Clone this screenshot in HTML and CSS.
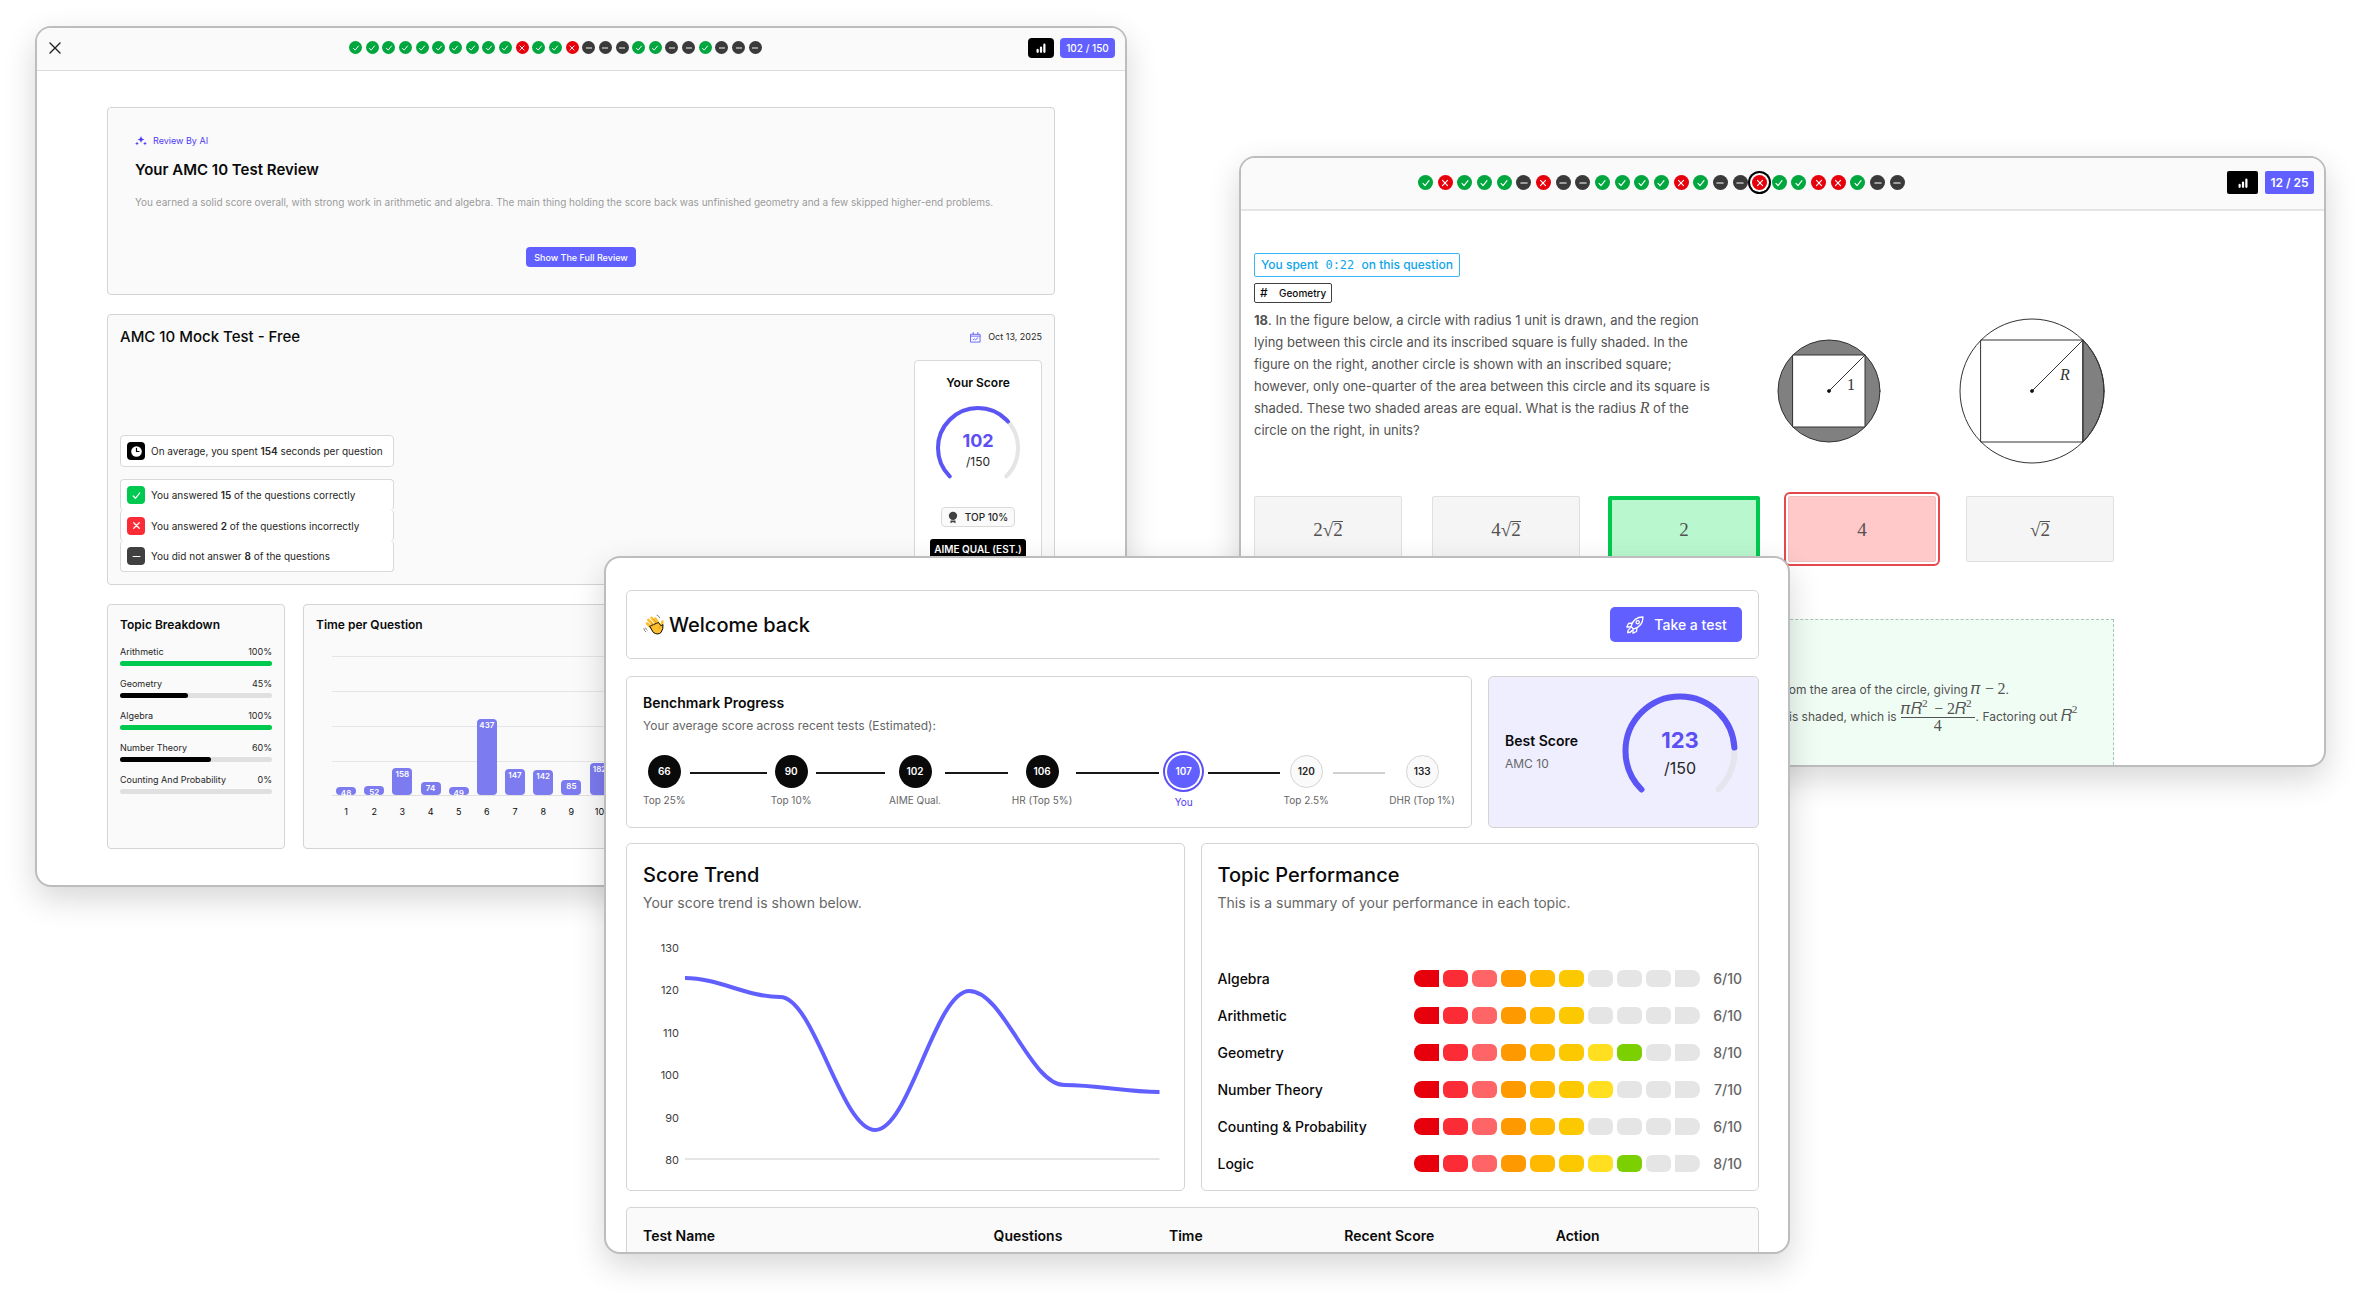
FILE: index.html
```html
<!DOCTYPE html>
<html lang="en">
<head>
<meta charset="UTF-8">
<meta name="viewport" content="width=device-width, initial-scale=1.0">
<title>AMC 10 Practice</title>
<link rel="stylesheet" href="styles.css">
</head>
<body>

<svg class="sprite" aria-hidden="true">
    <symbol id="icon-check" viewBox="0 0 16 16"><path d="M4 8.6l2.7 2.8L12 4.8"/></symbol>
    <symbol id="icon-cross" viewBox="0 0 16 16"><path d="M4.6 4.6l6.8 6.8M11.4 4.6l-6.8 6.8"/></symbol>
    <symbol id="icon-minus" viewBox="0 0 16 16"><path d="M3.8 8h8.4"/></symbol>
    <symbol id="icon-bars" viewBox="0 0 16 16"><path d="M3.5 13v-2.5M8 13V7.500M12.500 13V3.500"/></symbol>
</svg>

<main class="stage">

    <!-- test review -->
    <section class="window review">
        <header class="topbar">
            <button class="close" aria-label="Close"><svg viewBox="0 0 12 12"><path d="M1 1l10 10M11 1L1 11"/></svg></button>
            <div class="dots" data-results="ccccccccccxccxmmmccmmcmmm"></div>
            <div class="tags">
                <button class="tag dark" aria-label="Statistics"><svg class="icon"><use href="#icon-bars"/></svg></button>
                <span class="tag">102 / 150</span>
            </div>
        </header>
        <div class="review-body">
            <div class="panel ai-panel">
                <p class="ai-label">
                    <svg viewBox="0 0 12 10"><path d="M6 0l1 2.400L9.400 3.400 7 4.400 6 6.800 5 4.400 2.600 3.400 5 2.400zM2 5.500l.6 1.400L4 7.500l-1.400.6L2 9.500l-.6-1.400L0 7.500l1.400-.6zM10 5.500l.6 1.400 1.400.6-1.400.6-.6 1.400-.6-1.400L8 7.500l1.400-.6z"/></svg>
                    Review By AI
                </p>
                <h2>Your AMC 10 Test Review</h2>
                <p class="ai-text">You earned a solid score overall, with strong work in arithmetic and algebra. The main thing holding the score back was unfinished geometry and a few skipped higher-end problems.</p>
                <button class="btn-small">Show The Full Review</button>
            </div>

            <div class="panel result-panel">
                <div class="result-left">
                    <h2>AMC 10 Mock Test - Free</h2>
                    <ul class="stats">
                        <li class="spaced"><span class="stat-icon black"><svg viewBox="0 0 16 16"><circle cx="8" cy="8" r="6.500" fill="#fff" stroke="none"/><path d="M8 4v4h3" stroke="#000"/></svg></span>On average, you spent&nbsp;<b>154</b>&nbsp;seconds per question</li>
                        <li><span class="stat-icon green"><svg><use href="#icon-check"/></svg></span>You answered&nbsp;<b>15</b>&nbsp;of the questions correctly</li>
                        <li><span class="stat-icon red"><svg><use href="#icon-cross"/></svg></span>You answered&nbsp;<b>2</b>&nbsp;of the questions incorrectly</li>
                        <li><span class="stat-icon gray"><svg><use href="#icon-minus"/></svg></span>You did not answer&nbsp;<b>8</b>&nbsp;of the questions</li>
                    </ul>
                </div>
                <div class="result-right">
                    <p class="date">
                        <svg viewBox="0 0 12 12"><path d="M1 2.500h10v8.500H1zM1 4.500h10M3.500.5v2M8.500.5v2M3.500 8.500l1.500-1 1 1 2.500-2"/></svg>
                        Oct 13, 2025
                    </p>
                    <div class="score-card">
                        <h3>Your Score</h3>
                        <div class="gauge">
                            <svg viewBox="0 0 84 84">
                                <path class="track" d="M13.700 70.300A40 40 0 1 1 70.300 70.300"/>
                                <path class="value" pathLength="100" stroke-dasharray="68 100" d="M13.700 70.300A40 40 0 1 1 70.300 70.300"/>
                            </svg>
                            <div class="gauge-text"><strong>102</strong><span>/150</span></div>
                        </div>
                        <span class="rank"><svg viewBox="0 0 12 14"><circle cx="6" cy="5" r="5"/><path d="M3 10.500h6V14l-3-1.500L3 14z"/></svg>TOP 10%</span>
                        <span class="qual">AIME QUAL (EST.)</span>
                    </div>
                </div>
            </div>

            <div class="review-row">
                <div class="panel breakdown">
                    <h3>Topic Breakdown</h3>
                    <div class="topic"><span>Arithmetic</span><span>100%</span><div class="bar"><i class="full" style="width:100%"></i></div></div>
                    <div class="topic"><span>Geometry</span><span>45%</span><div class="bar"><i style="width:45%"></i></div></div>
                    <div class="topic"><span>Algebra</span><span>100%</span><div class="bar"><i class="full" style="width:100%"></i></div></div>
                    <div class="topic"><span>Number Theory</span><span>60%</span><div class="bar"><i style="width:60%"></i></div></div>
                    <div class="topic"><span>Counting And Probability</span><span>0%</span><div class="bar"></div></div>
                </div>
                <div class="panel time-panel">
                    <h3>Time per Question</h3>
                    <div class="time-chart" id="timeChart"></div>
                    <div class="time-axis" id="timeAxis"></div>
                </div>
            </div>
        </div>
    </section>

    <!-- question view -->
    <section class="window question">
        <header class="topbar">
            <div class="dots" data-results="cxcccmxmmccccxcmmxccxxcmm" data-current="17"></div>
            <div class="tags">
                <button class="tag dark" aria-label="Statistics"><svg class="icon"><use href="#icon-bars"/></svg></button>
                <span class="tag">12 / 25</span>
            </div>
        </header>
        <div class="question-body">
            <div class="problem">
                <div class="problem-text">
                    <p class="spent">You spent <code>0:22</code> on this question</p>
                    <p class="subject"><span>#</span>Geometry</p>
                    <p class="prompt"><b>18</b>. In the figure below, a circle with radius 1 unit is drawn, and the region<br>
                    lying between this circle and its inscribed square is fully shaded. In the<br>
                    figure on the right, another circle is shown with an inscribed square;<br>
                    however, only one-quarter of the area between this circle and its square is<br>
                    shaded. These two shaded areas are equal. What is the radius <i>R</i> of the<br>
                    circle on the right, in units?</p>
                </div>
                <svg class="figure" viewBox="0 0 328 146">
                    <circle cx="52" cy="73" r="51" fill="#808080"/>
                    <path d="M16 37h72v72H16z" fill="#fff"/>
                    <path d="M52 73l36-36"/>
                    <circle cx="52" cy="73" r="1.500" fill="#000"/>
                    <path d="M306 22A72 72 0 0 1 306 124z" fill="#808080"/>
                    <circle cx="255" cy="73" r="72"/>
                    <path d="M204 22h102v102H204z"/>
                    <path d="M255 73l51-51"/>
                    <circle cx="255" cy="73" r="1.500" fill="#000"/>
                    <text x="70" y="72">1</text>
                    <text x="283" y="62" font-style="italic">R</text>
                </svg>
            </div>
            <div class="answers">
                <button><math><mn>2</mn><msqrt><mn>2</mn></msqrt></math></button>
                <button><math><mn>4</mn><msqrt><mn>2</mn></msqrt></math></button>
                <button class="correct"><math><mn>2</mn></math></button>
                <button class="wrong"><math><mn>4</mn></math></button>
                <button><math><msqrt><mn>2</mn></msqrt></math></button>
            </div>
            <div class="solution">
                <p class="continued">from the area of the circle, giving <math><mi>π</mi><mo>−</mo><mn>2</mn></math>.</p>
                <p>is shaded, which is <math displaystyle="true"><mfrac><mrow><mi>π</mi><msup><mi>R</mi><mn>2</mn></msup><mo>−</mo><mn>2</mn><msup><mi>R</mi><mn>2</mn></msup></mrow><mn>4</mn></mfrac></math>. Factoring out <math><msup><mi>R</mi><mn>2</mn></msup></math></p>
            </div>
        </div>
    </section>

    <!-- dashboard -->
    <section class="window dashboard">
        <div class="card welcome">
            <h1>
                <svg class="wave" viewBox="0 0 22 22">
                    <g fill="none" stroke="#fbbf2d" stroke-linecap="round" stroke-width="2.600"><path d="M4 9.500l6 6M5.200 5.800l7 7M8.500 3.800l6.500 8M12.300 4.500l4 6.500M19.500 7.500l-1.500 6"/></g>
                    <path d="M7 12L15.500 8.500 18 12 20 10.500Q20.500 15 18 18.500 14.500 21.500 10.500 18.500z" fill="#fbbf2d"/>
                    <path d="M7.300 6.800l4 4.500M10.600 5.200l3.500 4.500M6 9.700l3.500 3.500M15.800 15q.2-2.500 1.700-3.500" fill="none" stroke="#e08f12" stroke-width=".6"/>
                    <path d="M14 1.200q2 .6 2.700 2.500M.8 14.500q.3 2.200 2 3.400M2.600 14q.2 1.500 1.500 2.400" fill="none" stroke="#666" stroke-width=".8"/>
                </svg>
                Welcome back
            </h1>
            <button class="btn">
                <svg viewBox="0 0 20 20"><path d="M6 11.500C7.500 6 11.500 2 18 2c0 6.500-4 10.500-9.500 12zM7.500 8L3.500 8.500 1.800 12l4 0M12 12.500l-.5 4L8 18.200V14.200M5 13.500c-1.500.5-2.300 2-2.300 4.200 2.200 0 3.500-.7 4.200-2.200"/><circle cx="12.700" cy="7.300" r="1.600"/></svg>
                Take a test
            </button>
        </div>

        <div class="top-row">
            <div class="card benchmark">
                <h3>Benchmark Progress</h3>
                <p>Your average score across recent tests (Estimated):</p>
                <ol class="steps">
                    <li class="step"><b>66</b>Top 25%</li>
                    <li class="line" style="flex-grow:81"></li>
                    <li class="step"><b>90</b>Top 10%</li>
                    <li class="line" style="flex-grow:73"></li>
                    <li class="step"><b>102</b>AIME Qual.</li>
                    <li class="line" style="flex-grow:66"></li>
                    <li class="step"><b>106</b>HR (Top 5%)</li>
                    <li class="line" style="flex-grow:87"></li>
                    <li class="step you"><b>107</b>You</li>
                    <li class="line" style="flex-grow:75"></li>
                    <li class="step next"><b>120</b>Top 2.5%</li>
                    <li class="line next" style="flex-grow:55"></li>
                    <li class="step next"><b>133</b>DHR (Top 1%)</li>
                </ol>
            </div>
            <div class="card best">
                <div>
                    <h3>Best Score</h3>
                    <p>AMC 10</p>
                </div>
                <div class="gauge large">
                    <svg viewBox="0 0 116 116">
                        <path class="track" d="M19.500 96.500A54.500 54.500 0 1 1 96.500 96.500"/>
                        <path class="value" pathLength="100" stroke-dasharray="82 100" d="M19.500 96.500A54.500 54.500 0 1 1 96.500 96.500"/>
                    </svg>
                    <div class="gauge-text"><strong>123</strong><span>/150</span></div>
                </div>
            </div>
        </div>

        <div class="middle-row">
            <div class="card">
                <h2>Score Trend</h2>
                <p>Your score trend is shown below.</p>
                <div class="trend">
                    <div class="trend-axis"><span>130</span><span>120</span><span>110</span><span>100</span><span>90</span><span>80</span></div>
                    <svg viewBox="0 0 474 212" preserveAspectRatio="none">
                        <path class="base" d="M0 211h474"/>
                        <path class="curve" d="M0 30C34 30 61 49 95 49S156 182 190 182S250 43 284 43S345 137 379 137S440 144 474 144"/>
                    </svg>
                </div>
            </div>
            <div class="card">
                <h2>Topic Performance</h2>
                <p>This is a summary of your performance in each topic.</p>
                <div class="topics" id="topics"></div>
            </div>
        </div>

        <div class="tests">
            <table>
                <thead>
                    <tr><th>Test Name</th><th>Questions</th><th>Time</th><th>Recent Score</th><th>Action</th></tr>
                </thead>
            </table>
        </div>
    </section>
</main>

<script>
    var kinds = {
        c: ['correct', 'check'],
        x: ['incorrect', 'cross'],
        m: ['skipped', 'minus']
    };

    // question markers in the top bars
    document.querySelectorAll('.dots').forEach(function (el) {
        var html = '';
        el.dataset.results.split('').forEach(function (r, i) {
            var current = String(i) === el.dataset.current ? ' current' : '';
            html += '<button class="dot ' + kinds[r][0] + current + '" aria-label="Question ' + (i + 1) + ', ' + kinds[r][0] + '">' +
                '<svg><use href="#icon-' + kinds[r][1] + '"/></svg></button>';
        });
        el.innerHTML = html;
    });

    // seconds per question, chart top is 800
    var times = [48, 52, 158, 74, 49, 437, 147, 142, 85, 182];
    var bars = '';
    var axis = '';
    times.forEach(function (t, i) {
        bars += '<span style="height:' + (t / 8) + '%">' + t + '</span>';
        axis += '<span>' + (i + 1) + '</span>';
    });
    document.getElementById('timeChart').innerHTML = bars;
    document.getElementById('timeAxis').innerHTML = axis;

    var topics = [['Algebra', 6], ['Arithmetic', 6], ['Geometry', 8], ['Number Theory', 7], ['Counting &amp; Probability', 6], ['Logic', 8]];
    var rows = '';
    topics.forEach(function (t) {
        rows += '<div class="topic-row"><span class="topic-name">' + t[0] + '</span><div class="segments">';
        for (var i = 1; i <= 10; i++) {
            rows += '<i class="' + (i <= t[1] ? 's' + i : '') + '"></i>';
        }
        rows += '</div><span class="topic-score">' + t[1] + '/10</span></div>';
    });
    document.getElementById('topics').innerHTML = rows;
</script>

</body>
</html>
```

FILE: styles.css
```css
* {
    box-sizing: border-box;
}
body {
    margin: 0;
    background: #fff;
    color: #0a0a0a;
    font-family: Inter, "Liberation Sans", sans-serif;
    font-size: 14px;
}
h1, h2, h3, p, ul, ol {
    margin: 0;
    padding: 0;
    list-style: none;
}
button {
    border: 0;
    padding: 0;
    background: none;
    color: inherit;
    font: inherit;
    cursor: pointer;
}
svg {
    display: block;
    fill: none;
    stroke: currentColor;
    stroke-linecap: round;
    stroke-linejoin: round;
}
math {
    font-family: "Liberation Serif", serif;
}
.sprite {
    position: absolute;
    width: 0;
    height: 0;
}
.stage {
    position: relative;
    min-height: 1294px;
    overflow: hidden;
}

/* windows */
.window {
    position: absolute;
    border: 2px solid #bdbdbd;
    border-radius: 16px;
    background: #fff;
    box-shadow: 0 12px 32px rgba(0, 0, 0, 0.16);
    overflow: hidden;
}
.review {
    top: 26px;
    left: 35px;
    right: calc(50% + 53px);
}
.question {
    top: 156px;
    left: calc(50% + 59px);
    right: 34px;
}
.dashboard {
    top: 556px;
    left: calc(25% + 14px);
    right: calc(25% - 20px);
    padding: 32px 29px 0 20px;
}

/* top bars */
.topbar {
    display: flex;
    align-items: center;
    justify-content: space-between;
    height: 43px;
    padding: 0 10px 3px 12px;
    background: #fafafa;
    border-bottom: 1px solid #dcdcdc;
}
.close {
    width: 34px;
}
.close svg {
    width: 12px;
    height: 12px;
    color: #222;
    stroke-width: 1.4;
}
.dots {
    display: flex;
    justify-content: space-between;
    width: 413px;
}
.dot {
    display: grid;
    place-items: center;
    width: 13px;
    height: 13px;
    border-radius: 50%;
    color: #fff;
}
.dot svg {
    width: 10px;
    height: 10px;
    stroke-width: 1.5;
}
.correct {
    background: #00a63e;
}
.incorrect {
    background: #e7000b;
}
.skipped {
    background: #3a3a3a;
}
.tags {
    display: flex;
    gap: 6px;
}
.tag {
    display: grid;
    place-items: center;
    width: 55px;
    height: 20px;
    border-radius: 4px;
    background: #615fff;
    color: #fff;
    font-size: 10px;
    font-weight: 500;
}
.tag.dark {
    width: 26px;
    background: #000;
}
.tag .icon {
    width: 12px;
    height: 12px;
    stroke-width: 3;
}

/* review window */
.review-body {
    display: flex;
    flex-direction: column;
    gap: 19px;
    padding: 36px 70px;
}
.panel {
    border: 1px solid #d4d4d4;
    border-radius: 4px;
    background: #fafafa;
}
.ai-panel {
    display: flex;
    flex-direction: column;
    padding: 26px 27px 27px;
}
.ai-label {
    display: flex;
    align-items: center;
    gap: 6px;
    color: #4f39f6;
    font-size: 9px;
    line-height: 14px;
}
.ai-label svg {
    width: 12px;
    height: 10px;
    fill: currentColor;
    stroke: none;
}
.ai-panel h2 {
    margin-top: 12px;
    font-size: 15px;
    font-weight: 600;
    line-height: 20px;
}
.ai-text {
    margin-top: 14px;
    color: #9a9a9a;
    font-size: 10px;
    line-height: 16px;
}
.btn-small {
    align-self: center;
    width: 110px;
    height: 20px;
    margin-top: 37px;
    border-radius: 4px;
    background: #615fff;
    color: #fff;
    font-size: 9px;
    font-weight: 500;
}
.result-panel {
    display: flex;
    justify-content: space-between;
    padding: 12px;
}
.result-left {
    display: flex;
    flex-direction: column;
    justify-content: space-between;
}
.result-left h2 {
    font-size: 15px;
    font-weight: 500;
    line-height: 20px;
}
.stats li {
    display: flex;
    align-items: center;
    width: 274px;
    height: 31px;
    padding: 0 6px;
    border: 1px solid #d9d9d9;
    border-width: 0 1px;
    border-radius: 4px;
    background: #fff;
    color: #262626;
    font-size: 10px;
}
.stats b {
    font-weight: 600;
}
.stats .spaced {
    height: 32px;
    margin-bottom: 12px;
    border-width: 1px;
}
.stats .spaced + li {
    border-top-width: 1px;
}
.stats li:last-child {
    border-bottom-width: 1px;
}
.stat-icon {
    display: grid;
    place-items: center;
    width: 18px;
    height: 18px;
    margin-right: 6px;
    border-radius: 4px;
    color: #fff;
}
.stat-icon svg {
    width: 13px;
    height: 13px;
    stroke-width: 1.5;
}
.black {
    background: #000;
}
.green {
    background: #00c950;
}
.red {
    background: #fb2c36;
}
.gray {
    background: #404040;
}
.date {
    display: flex;
    align-items: center;
    justify-content: flex-end;
    gap: 7px;
    color: #262626;
    font-size: 9px;
    line-height: 20px;
}
.date svg {
    width: 11px;
    height: 11px;
    color: #615fff;
}
.score-card {
    display: flex;
    flex-direction: column;
    align-items: center;
    width: 128px;
    height: 212px;
    margin-top: 13px;
    padding-top: 12px;
    border: 1px solid #d9d9d9;
    border-radius: 4px;
    background: #fff;
}
h3 {
    font-size: 12px;
    font-weight: 600;
    line-height: 20px;
}
.gauge {
    display: grid;
    width: 84px;
    height: 84px;
    margin-top: 13px;
}
.gauge > * {
    grid-area: 1 / 1;
}
.gauge path {
    stroke-width: 4;
}
.gauge .track {
    stroke: #e5e5e5;
}
.gauge .value {
    stroke: #5b55f6;
}
.gauge-text {
    display: flex;
    flex-direction: column;
    align-items: center;
    justify-content: center;
    padding-top: 6px;
    color: #262626;
    font-size: 12px;
    line-height: 20px;
}
.gauge-text strong {
    color: #5b4ff5;
    font-size: 18px;
    line-height: 22px;
}
.rank {
    display: flex;
    align-items: center;
    gap: 7px;
    height: 20px;
    margin-top: 17px;
    padding: 0 6px;
    border: 1px solid #d9d9d9;
    border-radius: 4px;
    background: #fafafa;
    color: #262626;
    font-size: 10px;
    font-weight: 500;
}
.rank svg {
    width: 10px;
    height: 13px;
    fill: #404040;
    stroke: none;
}
.qual {
    margin-top: 12px;
    padding: 0 4px;
    border-radius: 3px;
    background: #000;
    color: #fff;
    font-size: 10px;
    font-weight: 600;
    line-height: 20px;
}
.review-row {
    display: grid;
    grid-template-columns: 178px 1fr;
    gap: 18px;
}
.breakdown, .time-panel {
    height: 245px;
    padding: 10px 12px;
}
.breakdown h3 {
    margin-bottom: 8px;
}
.topic {
    display: grid;
    grid-template-columns: 1fr auto;
    align-content: start;
    height: 32px;
    color: #262626;
    font-size: 9px;
    line-height: 18px;
}
.bar {
    grid-column: 1 / 3;
    height: 5px;
    border-radius: 3px;
    background: #e0e0e0;
}
.bar i {
    display: block;
    height: 5px;
    border-radius: 3px;
    background: #000;
}
.bar .full {
    background: #00c950;
}
.time-chart, .time-axis {
    display: grid;
    grid-template-columns: repeat(25, 1fr);
    margin: 0 6px 0 16px;
}
.time-chart {
    align-items: end;
    justify-items: center;
    height: 140px;
    margin-top: 21px;
    border-bottom: 1px solid #e0e0e0;
    background: repeating-linear-gradient(#e5e5e5 0 1px, transparent 1px 35px);
}
.time-chart span {
    width: 20px;
    padding-top: 2px;
    border-radius: 4px;
    background: #7c7bf0;
    color: #fff;
    font-size: 8px;
    font-weight: 600;
    line-height: 8px;
    text-align: center;
}
.time-axis {
    margin-top: 8px;
    font-size: 9px;
    line-height: 16px;
    text-align: center;
}

/* question window */
.question .topbar {
    height: 53px;
    padding: 0 10px 2px 177px;
    border-bottom: 2px solid #e5e5e5;
}
.question .dots {
    width: 487px;
}
.question .dot {
    width: 15px;
    height: 15px;
}
.question .dot svg {
    width: 12px;
    height: 12px;
}
.dot.current {
    box-shadow: 0 0 0 2px #fff, 0 0 0 4px #000;
}
.question .tags {
    gap: 7px;
}
.question .tag {
    width: 49px;
    height: 23px;
    border-radius: 2px;
    font-size: 12px;
    font-weight: 600;
}
.question .tag.dark {
    width: 31px;
}
.question-body {
    padding: 42px 15px 0 13px;
    max-width: 888px;
}
.problem {
    display: grid;
    grid-template-columns: 1fr 328px;
    align-items: end;
    padding-right: 9px;
}
.problem-text {
    height: 211px;
    white-space: nowrap;
}
.spent, .subject {
    width: max-content;
    border-radius: 2px;
}
.spent {
    padding: 0 6px;
    border: 1px solid #38b6f5;
    color: #0ea5e9;
    font-size: 12px;
    font-weight: 500;
    line-height: 22px;
}
.spent code {
    margin: 0 4px;
    font-family: "DejaVu Sans Mono", monospace;
    font-size: 12px;
    font-weight: 400;
}
.subject {
    margin-top: 6px;
    padding: 0 5px;
    border: 1px solid #404040;
    font-size: 10px;
    font-weight: 500;
    line-height: 18px;
}
.subject span {
    display: inline-block;
    width: 19px;
    font-size: 12px;
}
.prompt {
    margin-top: 6px;
    color: #525252;
    font-size: 13px;
    line-height: 22px;
}
.prompt i {
    font-family: "Liberation Serif", serif;
    font-size: 16px;
    line-height: 16px;
}
.figure {
    width: 328px;
    height: 146px;
    stroke: #333;
}
.figure text {
    fill: #333;
    stroke: none;
    font-family: "Liberation Serif", serif;
    font-size: 16px;
}
.answers {
    display: grid;
    grid-template-columns: repeat(5, 1fr);
    gap: 30px;
    margin-top: 32px;
}
.answers button {
    height: 66px;
    border: 1px solid #e0e0e0;
    border-radius: 2px;
    background: #f5f5f5;
    color: #525252;
    font-size: 19px;
}
.answers .correct {
    margin: 0 -2px;
    border: 4px solid #00c950;
    background: #b9f8cf;
}
.answers .wrong {
    border-color: #eec0c0;
    background: #ffc9c9;
    outline: 2px solid #e5484d;
    outline-offset: 2px;
}
.solution {
    height: 146px;
    margin-top: 57px;
    padding: 60px 0 0 534px;
    border: 1px dashed #a9c4b2;
    border-bottom: 0;
    background: #f0fdf4;
    color: #525252;
    font-size: 12px;
    white-space: nowrap;
}
.solution p {
    line-height: 20px;
}
.solution math {
    font-size: 16px;
}
.solution .continued {
    text-indent: -9px;
}

/* dashboard window */
.card {
    padding: 16px;
    border: 1px solid #d4d4d4;
    border-radius: 5px;
    background: #fff;
}
.card p {
    color: #666;
}
.welcome {
    display: flex;
    align-items: center;
    justify-content: space-between;
    height: 69px;
}
h1 {
    display: flex;
    align-items: center;
    gap: 4px;
    font-size: 20px;
    font-weight: 500;
}
.wave {
    width: 22px;
    height: 22px;
}
.btn {
    display: flex;
    align-items: center;
    justify-content: center;
    gap: 9px;
    width: 132px;
    height: 35px;
    border-radius: 5px;
    background: #615fff;
    color: #fff;
    font-weight: 500;
}
.btn svg {
    width: 20px;
    height: 20px;
    stroke-width: 1.3;
}
.top-row {
    display: grid;
    grid-template-columns: 1fr 271px;
    gap: 16px;
    height: 150px;
    margin-top: 17px;
}
.dashboard h3 {
    font-size: 14px;
    line-height: 20px;
}
.benchmark > p {
    margin-top: 3px;
    font-size: 12px;
    line-height: 20px;
}
.steps {
    display: flex;
    margin-top: 19px;
}
.step {
    display: flex;
    flex-direction: column;
    align-items: center;
    gap: 3px;
    color: #666;
    font-size: 10px;
    line-height: 18px;
    white-space: nowrap;
}
.step b {
    width: 33px;
    height: 33px;
    border-radius: 50%;
    background: #0a0a0a;
    color: #fff;
    font-size: 10px;
    font-weight: 600;
    line-height: 33px;
    text-align: center;
}
.step.you {
    gap: 5px;
    width: 41px;
    color: #4f39f6;
}
.you b {
    background: #615fff;
    box-shadow: 0 0 0 2px #fff, 0 0 0 4px #5b4ff5;
}
.next b {
    border: 1px solid #d4d4d4;
    background: #fafafa;
    color: #262626;
    line-height: 31px;
}
.line {
    flex-basis: 0;
    height: 2px;
    margin: 17px 4px 0;
    background: #171717;
}
.line.next {
    background: #d0d0d0;
}
.best {
    display: flex;
    justify-content: space-between;
    padding-right: 20px;
    background: #eeeeff;
}
.best > div:first-child {
    padding-top: 38px;
}
.best p {
    margin-top: 3px;
    font-size: 12px;
    line-height: 20px;
}
.gauge.large {
    width: 116px;
    height: 116px;
    margin-top: 0;
}
.large path {
    stroke-width: 6;
}
.large .track {
    stroke: #e5e5ee;
}
.large .gauge-text {
    padding-top: 4px;
    font-size: 16px;
    line-height: 26px;
}
.large strong {
    font-size: 22px;
    line-height: 30px;
}
.middle-row {
    display: grid;
    grid-template-columns: 1fr 1fr;
    gap: 16px;
    margin-top: 17px;
}
.middle-row .card {
    height: 348px;
}
.middle-row h2 {
    font-size: 20px;
    font-weight: 500;
    line-height: 30px;
}
.middle-row p {
    margin-top: 2px;
    font-size: 14px;
    line-height: 22px;
}
.trend {
    display: flex;
    gap: 6px;
    margin-top: 34px;
    padding-right: 8px;
}
.trend-axis {
    display: flex;
    flex-direction: column;
    justify-content: space-between;
    width: 36px;
    height: 224px;
    margin-top: -6px;
    color: #404040;
    font-size: 11px;
    line-height: 12px;
    text-align: right;
}
.trend svg {
    flex: 1;
    width: 100%;
    height: 212px;
    stroke-linecap: butt;
}
.base {
    stroke: #e5e5e5;
    stroke-width: 2;
}
.curve {
    stroke: #615fff;
    stroke-width: 4;
}
.topics {
    margin-top: 46px;
}
.topic-row {
    display: flex;
    align-items: center;
    height: 37px;
}
.topic-name {
    flex: 1;
    font-weight: 500;
}
.segments {
    display: flex;
    gap: 4px;
}
.segments i {
    width: 25px;
    height: 17px;
    border-radius: 6px;
    background: #e5e5e5;
}
.segments i:first-child {
    border-radius: 8px 0 0 8px;
}
.segments i:last-child {
    border-radius: 0 8px 8px 0;
}
.segments .s1 { background: #e7000b; }
.segments .s2 { background: #fb2c36; }
.segments .s3 { background: #ff6467; }
.segments .s4 { background: #fe9a00; }
.segments .s5 { background: #ffb900; }
.segments .s6 { background: #fcc800; }
.segments .s7 { background: #ffdf20; }
.segments .s8 { background: #7ccf00; }
.topic-score {
    width: 42px;
    color: #666;
    font-weight: 500;
    text-align: right;
}
.tests {
    height: 45px;
    margin-top: 16px;
    border: 1px solid #d4d4d4;
    border-bottom: 0;
    border-radius: 5px 5px 0 0;
    background: #fafafa;
}
.tests table {
    width: 100%;
    border-collapse: collapse;
    table-layout: fixed;
}
.tests th {
    width: 15.5%;
    height: 54px;
    padding: 0 16px;
    font-size: 14px;
    font-weight: 600;
    text-align: left;
}
.tests th:first-child {
    width: 31%;
}
.tests th:nth-child(4) {
    width: 18.7%;
}
.tests th:last-child {
    width: auto;
}
```
